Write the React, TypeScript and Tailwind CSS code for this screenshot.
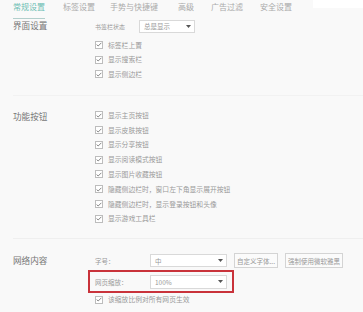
import React from "react";

function Caret() {
  return (
    <svg width="5" height="3" viewBox="0 0 5 3" className="shrink-0">
      <path d="M0 0 L5 0 L2.5 3 Z" fill="#555" />
    </svg>
  );
}

function Select({ value, w, h }: { value: string; w: string; h: string }) {
  return (
    <div
      className={`flex items-center justify-between border border-[#d9d9d9] bg-white pl-[4px] pr-[3px] text-[6.5px] leading-none text-[#999] ${w} ${h}`}
    >
      <span>{value}</span>
      <Caret />
    </div>
  );
}

function Check({ label }: { label: string }) {
  return (
    <div className="flex h-[14.8px] items-center">
      <div className="flex h-[8px] w-[8px] items-center justify-center border border-[#bdbdbd] bg-white">
        <svg width="6" height="5" viewBox="0 0 6 5">
          <path d="M0.6 2.6 L2.2 4 L5.4 0.8" fill="none" stroke="#777" strokeWidth="0.9" />
        </svg>
      </div>
      <span className="ml-[5px] text-[6.8px] leading-none text-[#9a9a9a]">{label}</span>
    </div>
  );
}

function Btn({ label, w }: { label: string; w: string }) {
  return (
    <div
      className={`flex h-[15px] items-center justify-center border border-[#d4d4d4] bg-[#fbfbfb] text-[6.5px] leading-none text-[#999] ${w}`}
    >
      {label}
    </div>
  );
}

export default function App() {
  const tabs = [
    { t: "常规设置", ml: "ml-0", active: true },
    { t: "标签设置", ml: "ml-[18px]" },
    { t: "手势与快捷键", ml: "ml-[15px]" },
    { t: "高级", ml: "ml-[20px]" },
    { t: "广告过滤", ml: "ml-[17px]" },
    { t: "安全设置", ml: "ml-[17px]" },
  ];
  return (
    <div className="relative h-[312px] w-[363px] overflow-hidden bg-[#f9f9f9] font-['Noto_Sans_CJK_SC','Noto_Sans',sans-serif]">
      <div className="absolute right-0 top-0 h-[8px] w-[50px] bg-white" />
      {/* Tabs */}
      <div className="flex h-[20px] items-start pl-[13px] pt-[1px] text-[8px] leading-[11px] text-[#aaaaaa]">
        {tabs.map((tb) => (
          <div
            key={tb.t}
            className={`${tb.ml} ${
              tb.active ? "h-[18px] border-b border-[#b3cfcc] text-[#6cbdb3]" : ""
            }`}
          >
            {tb.t}
          </div>
        ))}
      </div>

      {/* Section 1 */}
      <div className="flex">
        <div className="w-[95px] pl-[13px] pt-[0px] text-[8.6px] leading-[11px] text-[#777]">界面设置</div>
        <div className="flex flex-col">
          <div className="flex h-[13px] items-center">
            <span className="w-[44px] text-[6px] leading-none text-[#999]">书签栏状态</span>
            <Select value="总是显示" w="w-[56px]" h="h-[13px]" />
          </div>
          <div className="mt-[4.5px]">
            <Check label="标签栏上置" />
            <Check label="显示搜索栏" />
            <Check label="显示侧边栏" />
          </div>
        </div>
      </div>

      <div className="ml-[13px] mt-[13px] h-px bg-[#f2f2f2]" />

      {/* Section 2 */}
      <div className="mt-[12px] flex">
        <div className="w-[95px] pl-[13px] pt-[3px] text-[8.6px] leading-[11px] text-[#777]">功能按钮</div>
        <div className="flex flex-col">
          <Check label="显示主页按钮" />
          <Check label="显示皮肤按钮" />
          <Check label="显示分享按钮" />
          <Check label="显示阅读模式按钮" />
          <Check label="显示图片收藏按钮" />
          <Check label="隐藏侧边栏时，窗口左下角显示展开按钮" />
          <Check label="隐藏侧边栏时，显示登录按钮和头像" />
          <Check label="显示游戏工具栏" />
        </div>
      </div>

      <div className="ml-[13px] mt-[12px] h-px bg-[#efefef]" />

      {/* Section 3 */}
      <div className="mt-[14px] flex">
        <div className="w-[95px] pl-[13px] pt-[2px] text-[8.6px] leading-[11px] text-[#777]">网络内容</div>
        <div className="flex flex-col">
          <div className="flex items-center">
            <span className="w-[55px] text-[6.5px] leading-none text-[#999]">字号：</span>
            <Select value="中" w="w-[77px]" h="h-[13px]" />
            <div className="ml-[7px]">
              <Btn label="自定义字体..." w="w-[44px]" />
            </div>
            <div className="ml-[7px]">
              <Btn label="强制使用微软雅黑" w="w-[58px]" />
            </div>
          </div>
          <div className="ml-[-7px] mt-[2px] flex h-[23px] w-[146px] items-center border-2 border-[#c9333b] pl-[5px]">
            <span className="w-[55px] text-[6.5px] leading-none text-[#999]">网页缩放：</span>
            <Select value="100%" w="w-[77px]" h="h-[14px]" />
          </div>
          <div className="mt-[-1px]">
            <Check label="该缩放比例对所有网页生效" />
          </div>
        </div>
      </div>
    </div>
  );
}
